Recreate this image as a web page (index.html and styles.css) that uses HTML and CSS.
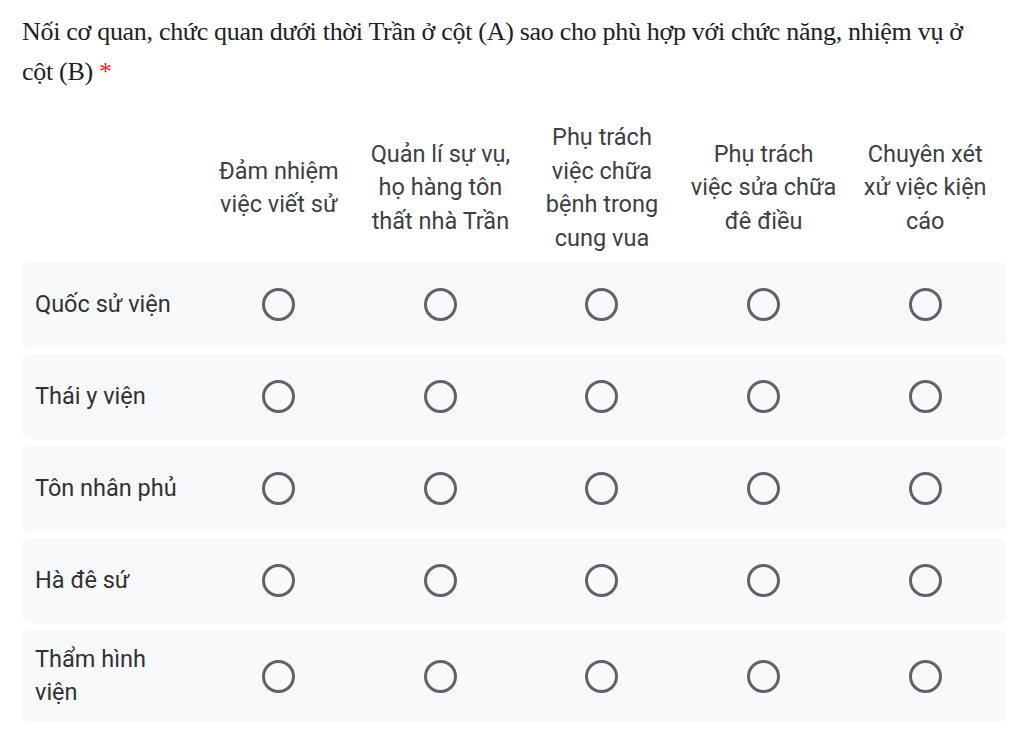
FILE: index.html
```html
<!DOCTYPE html>
<html lang="vi">
<head>
<meta charset="utf-8">
<link rel="stylesheet" href="styles.css">
</head>
<body>
<div class="page">
  <div class="question">Nối cơ quan, chức quan dưới thời Trần ở cột (A) sao cho phù hợp với chức năng, nhiệm vụ ở <span class="tail">cột (B) <span class="req">*</span></span></div>
  <div class="grid">
    <div class="head">
      <div class="hcell"></div>
      <div class="hcell">Đảm nhiệm<br>việc viết sử</div>
      <div class="hcell">Quản lí sự vụ,<br>họ hàng tôn<br>thất nhà Trần</div>
      <div class="hcell">Phụ trách<br>việc chữa<br>bệnh trong<br>cung vua</div>
      <div class="hcell">Phụ trách<br>việc sửa chữa<br>đê điều</div>
      <div class="hcell">Chuyên xét<br>xử việc kiện<br>cáo</div>
    </div>
    <div class="row">
      <div class="label">Quốc sử viện</div>
      <div class="cell"><span class="radio"></span></div>
      <div class="cell"><span class="radio"></span></div>
      <div class="cell"><span class="radio"></span></div>
      <div class="cell"><span class="radio"></span></div>
      <div class="cell"><span class="radio"></span></div>
    </div>
    <div class="row">
      <div class="label">Thái y viện</div>
      <div class="cell"><span class="radio"></span></div>
      <div class="cell"><span class="radio"></span></div>
      <div class="cell"><span class="radio"></span></div>
      <div class="cell"><span class="radio"></span></div>
      <div class="cell"><span class="radio"></span></div>
    </div>
    <div class="row">
      <div class="label">Tôn nhân phủ</div>
      <div class="cell"><span class="radio"></span></div>
      <div class="cell"><span class="radio"></span></div>
      <div class="cell"><span class="radio"></span></div>
      <div class="cell"><span class="radio"></span></div>
      <div class="cell"><span class="radio"></span></div>
    </div>
    <div class="row">
      <div class="label">Hà đê sứ</div>
      <div class="cell"><span class="radio"></span></div>
      <div class="cell"><span class="radio"></span></div>
      <div class="cell"><span class="radio"></span></div>
      <div class="cell"><span class="radio"></span></div>
      <div class="cell"><span class="radio"></span></div>
    </div>
    <div class="row">
      <div class="label">Thẩm hình viện</div>
      <div class="cell"><span class="radio"></span></div>
      <div class="cell"><span class="radio"></span></div>
      <div class="cell"><span class="radio"></span></div>
      <div class="cell"><span class="radio"></span></div>
      <div class="cell"><span class="radio"></span></div>
    </div>
  </div>
</div>
</body>
</html>
```

FILE: styles.css
```css
* { box-sizing: border-box; }
html, body { margin: 0; padding: 0; background: #ffffff; }
.page {
  padding: 12px 18px 0 22px;
  width: 1024px;
}
.question {
  font-family: "Liberation Serif", "DejaVu Serif", serif;
  font-size: 26px;
  line-height: 40px;
  color: #202124;
  letter-spacing: -0.3px;
  padding-right: 10px;
}
.tail { white-space: nowrap; }
.req { color: #d93025; }
.grid {
  margin-top: 29px;
  display: flex;
  flex-direction: column;
  gap: 7px;
}
.head, .row {
  display: grid;
  grid-template-columns: 176px repeat(5, 1fr);
}
.head {
  align-items: center;
}
.hcell {
  font-family: Roboto, "Liberation Sans", sans-serif;
  font-size: 23.5px;
  line-height: 33.5px;
  color: #3c4043;
  text-align: center;
  white-space: nowrap;
}
.row {
  background: #f8f9fa;
  border-radius: 8px;
  min-height: 85px;
  align-items: center;
}
.label {
  font-family: Roboto, "Liberation Sans", sans-serif;
  font-size: 23.5px;
  line-height: 33px;
  color: #303134;
  padding: 13px 10px 13px 13px;
}
.cell {
  display: flex;
  justify-content: center;
  align-items: center;
}
.radio {
  width: 33px;
  height: 33px;
  border: 3px solid #5f6368;
  border-radius: 50%;
  display: block;
}
```
